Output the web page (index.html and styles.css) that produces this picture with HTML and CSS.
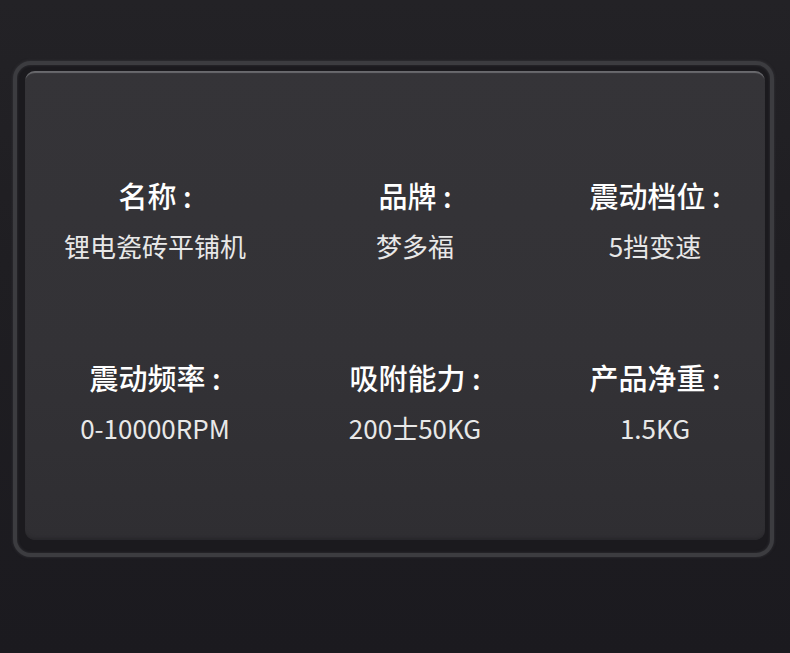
FILE: index.html
```html
<!DOCTYPE html>
<html lang="zh-CN">
<head>
    <meta charset="UTF-8">
    <meta name="viewport" content="width=device-width, initial-scale=1.0">
    <title>产品参数</title>
    <link rel="stylesheet" href="styles.css">
</head>
<body>
    <div class="frame">
        <div class="panel">
            <div class="spec-grid">
                <div class="spec">
                    <div class="spec-label">名称 :</div>
                    <div class="spec-value">锂电瓷砖平铺机</div>
                </div>
                <div class="spec">
                    <div class="spec-label">品牌 :</div>
                    <div class="spec-value">梦多福</div>
                </div>
                <div class="spec">
                    <div class="spec-label">震动档位 :</div>
                    <div class="spec-value">5挡变速</div>
                </div>
                <div class="spec">
                    <div class="spec-label">震动频率 :</div>
                    <div class="spec-value">0-10000RPM</div>
                </div>
                <div class="spec">
                    <div class="spec-label">吸附能力 :</div>
                    <div class="spec-value">200士50KG</div>
                </div>
                <div class="spec">
                    <div class="spec-label">产品净重 :</div>
                    <div class="spec-value">1.5KG</div>
                </div>
            </div>
        </div>
    </div>
</body>
</html>
```

FILE: styles.css
```css
/* spec card */
body {
    font-family: "Noto Sans CJK SC", "Noto Sans", sans-serif;
    background: linear-gradient(to bottom, #232226 0%, #1f1e22 40%, #1b1a1f 100%);
    margin: 0;
    padding: 0;
    height: 653px;
    overflow: hidden;
}
.frame {
    box-sizing: border-box;
    width: 761px;
    height: 496px;
    margin: 61px 0 0 13px;
    padding: 6px 5px 11px 8px;
    border: 4px solid #3c3c40;
    border-radius: 18px;
    background-color: #1b1a1e;
    box-shadow: 0 0 3px rgba(70, 70, 75, 0.6), inset 0 0 3px rgba(70, 70, 75, 0.6);
}
.panel {
    box-sizing: border-box;
    height: 469px;
    padding-top: 104px;
    border-radius: 10px;
    background: linear-gradient(to bottom, #353438 0%, #333236 60%, #2f2e32 100%);
    box-shadow: inset 0 3px 1px -1px #6a6a6e, inset 0 -4px 3px -2px #28272b;
}
.spec-grid {
    display: grid;
    grid-template-columns: 260px 260px 220px;
    row-gap: 94px;
}
.spec {
    text-align: center;
}
.spec-label {
    font-size: 29px;
    font-weight: 500;
    line-height: 40px;
    color: #ffffff;
    margin-bottom: 14px;
}
.spec-value {
    font-size: 26px;
    line-height: 34px;
    color: #e8e8e8;
}
```
